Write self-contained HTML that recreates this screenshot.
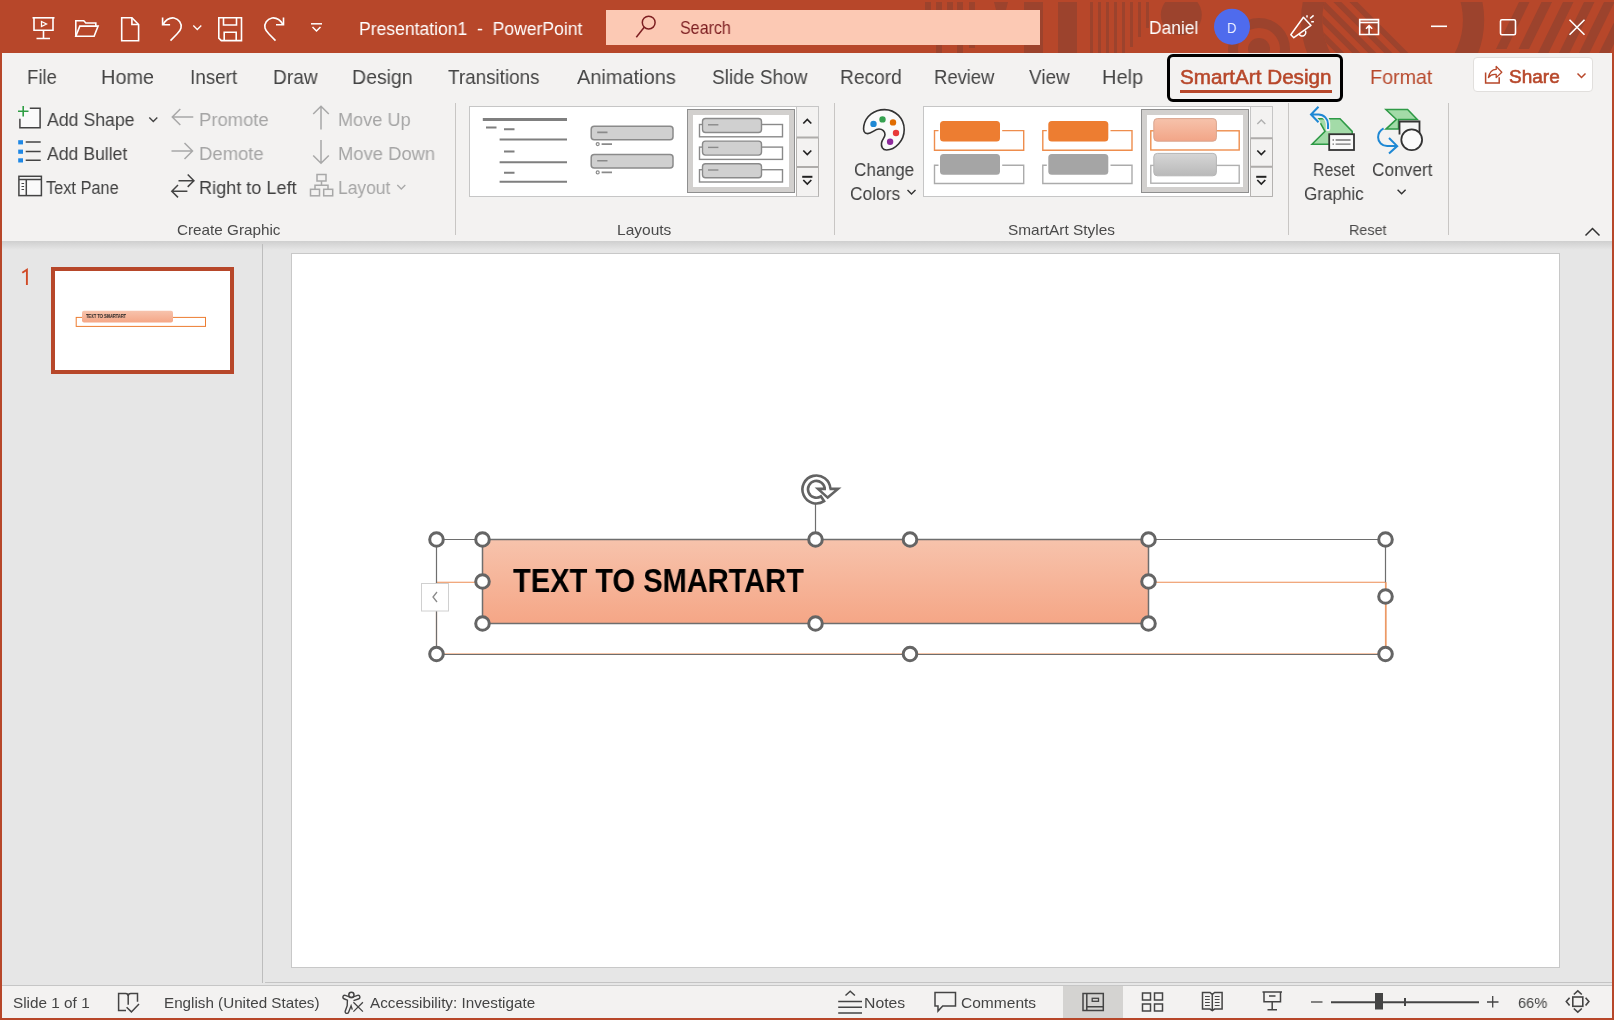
<!DOCTYPE html>
<html><head><meta charset="utf-8"><style>
*{margin:0;padding:0;box-sizing:border-box}
html,body{width:1614px;height:1020px;overflow:hidden;background:#b7472a;font-family:"Liberation Sans",sans-serif;color:#444}
.a{position:absolute}
.t{position:absolute;white-space:nowrap;line-height:1;transform-origin:0 0;will-change:transform}
svg.s{position:absolute;left:0;top:0;overflow:visible}
</style></head><body>
<div class="a" style="left:0;top:0;width:1614px;height:53px;background:#b7472a"></div>
<svg class="s" width="1614" height="53" style="clip-path:inset(2px 0 0 0)"><rect x="925" y="2" width="6" height="9" fill="#9c432d"/><rect x="936" y="2" width="6" height="51" fill="#9c432d"/><rect x="947" y="2" width="6" height="9" fill="#9c432d"/><rect x="957" y="2" width="6" height="51" fill="#9c432d"/><rect x="969" y="2" width="6" height="46" fill="#9c432d"/><polygon points="994,2 1008,2 1006,10 996,10" fill="#9c432d"/><rect x="1024" y="2" width="19" height="51" fill="#9c432d"/><rect x="1058" y="2" width="19" height="51" fill="#9c432d"/><rect x="1090" y="2" width="3" height="51" fill="#9c432d"/><rect x="1098" y="2" width="3" height="51" fill="#9c432d"/><rect x="1106" y="2" width="3" height="51" fill="#9c432d"/><rect x="1114" y="2" width="3" height="51" fill="#9c432d"/><rect x="1122" y="2" width="3" height="51" fill="#9c432d"/><rect x="1130" y="2" width="3" height="45" fill="#9c432d"/><rect x="1138" y="2" width="3" height="35" fill="#9c432d"/><rect x="1146" y="2" width="3" height="26" fill="#9c432d"/><circle cx="1181.3" cy="14.8" r="20.5" fill="#9c432d"/><circle cx="1259" cy="49" r="31" fill="#9c432d"/><circle cx="1259" cy="49" r="21" fill="#b7472a"/><circle cx="1259" cy="49" r="11" fill="#9c432d"/><path fill-rule="evenodd" d="M1484.2 20a91.6 91.6 0 1 0 -183.2 0a91.6 91.6 0 1 0 183.2 0zM1462.9 20a70.3 70.3 0 1 0 -140.6 0a70.3 70.3 0 1 0 140.6 0z" fill="#9c432d"/><clipPath id="hole"><circle cx="1392.6" cy="20" r="70.3"/></clipPath><g clip-path="url(#hole)"><polygon points="1285.3,2 1293.3,2 1346.3,55 1338.3,55" fill="#9c432d"/><polygon points="1301.3,2 1309.3,2 1362.3,55 1354.3,55" fill="#9c432d"/><polygon points="1317.3,2 1325.3,2 1378.3,55 1370.3,55" fill="#9c432d"/><polygon points="1333.3,2 1341.3,2 1394.3,55 1386.3,55" fill="#9c432d"/><polygon points="1349.3,2 1357.3,2 1410.3,55 1402.3,55" fill="#9c432d"/></g><polygon points="1519,2 1529.5,2 1506.5,49 1496.0,49" fill="#9c432d"/><polygon points="1541.5,2 1552.0,2 1529.0,49 1518.5,49" fill="#9c432d"/><polygon points="1563,2 1573.5,2 1548.5,53 1538.0,53" fill="#9c432d"/><polygon points="1584,2 1594.5,2 1569.5,53 1559.0,53" fill="#9c432d"/><polygon points="1604,2 1614.5,2 1589.5,53 1579.0,53" fill="#9c432d"/><polygon points="1624,2 1634.5,2 1609.5,53 1599.0,53" fill="#9c432d"/></svg>
<div class="a" style="left:606px;top:10px;width:434px;height:35px;background:#fcc9b4"></div>

<svg class="s" width="1614" height="53">
 <g stroke="#fff" fill="none" stroke-width="1.6">
  <!-- presenter -->
  <path d="M32.5 17.8h22"/><path d="M34 17.8v12.5h19v-12.5"/><path d="M43.5 30.3v8.2M36.5 38.5h13.5"/>
  <path d="M41.5 21.5v5l5-2.5z" stroke-width="1.3"/>
  <!-- open folder -->
  <path d="M75.8 36.3v-15.5h8l2 2.2h10v3.5"/><path d="M75.8 36.3l4-10.2h18.3l-4 10.2z"/>
  <!-- new doc -->
  <path d="M121.7 17.8v23h16.9v-16.3l-6.7-6.7z"/><path d="M131.9 17.8v6.7h6.7"/>
  <!-- undo -->
  <path d="M162.6 17.5v7.3h7.5"/><path d="M163 24.5c3-5 7-7 11-6.5c5 1 8 5.5 7 10c-0.5 2.5-2 4-4 6l-6.5 6.6"/>
  <path d="M193.3 25.5l4 4l4-4" stroke-width="1.3"/>
  <!-- save -->
  <path d="M218.8 17.8h22.7v22.8h-20.2l-2.5-2.5z"/><path d="M223.5 17.8v7.2h13v-7.2"/><path d="M224.2 40.6v-8.3h12v8.3"/>
  <!-- redo -->
  <path d="M283.5 17.5v7.3h-7.5"/><path d="M283 24.5c-3-5-7-7-11-6.5c-5 1-8 5.5-7 10c0.5 2.5 2 4 4 6l6.5 6.6"/>
  <!-- customize -->
  <path d="M311 23.8h11" stroke-width="1.5"/><path d="M312.5 27l4 4l4-4" stroke-width="1.5"/>
  <!-- search magnifier -->
  <circle cx="648.7" cy="22.6" r="6.4" stroke="#7d1f22" stroke-width="1.5"/><path d="M644.2 27.3l-7.9 9.9" stroke="#7d1f22" stroke-width="1.5"/>
  <!-- megaphone -->
  <path d="M1303.4 17.3l7.6 8.1l-17.2 12.3l-3-3z" stroke-width="1.5" stroke-linejoin="round"/>
  <path d="M1299 34.2a3.6 3.6 0 1 0 6.3-3.6" stroke-width="1.5"/>
  <path d="M1307 15.2v2.2M1310.1 18.5l3.5-3.1M1311.2 21.8h2.7" stroke-width="1.5"/>
  <!-- ribbon display -->
  <path d="M1359.7 19.6h18.8v14.9h-18.8z"/><path d="M1359.7 22.5h18.8"/><path d="M1369.1 34.5v-8.5M1366 28.8l3.1-3.1l3.1 3.1"/>
  <!-- minimize -->
  <path d="M1431 26.3h16"/>
  <!-- maximize -->
  <rect x="1500.5" y="19.7" width="15" height="15" rx="1.5"/>
  <!-- close -->
  <path d="M1569.5 19.7l15 15M1584.5 19.7l-15 15"/>
 </g>
 <circle cx="1232" cy="26.7" r="18" fill="#4f6bed"/>
</svg>
<div class="a" style="left:2px;top:53px;width:1610px;height:188px;background:#f3f2f1"></div>
<div class="a" style="left:2px;top:241px;width:1610px;height:9px;background:linear-gradient(#cfcfcf,#e6e6e6)"></div>
<div class="a" style="left:1167px;top:54px;width:176px;height:48px;border:3px solid #000;border-radius:6px"></div>
<div class="a" style="left:1180px;top:90px;width:152px;height:3px;background:#b7472a"></div>
<div class="a" style="left:1473px;top:57px;width:120px;height:35px;background:#fff;border:1px solid #e1dfdd;border-radius:4px"></div>
<svg class="s" width="1614" height="120"><g fill="none" stroke="#b7472a" stroke-width="1.5">
<path d="M1485.6 72.6V83.1H1499.2V77.2"/><path d="M1488.4 77.6C1489.5 72 1492 69.5 1496.2 69.4V66.4L1501.8 72.3L1496.2 77.6V74.5C1492.5 74 1490 75.5 1488.4 77.6Z" stroke-width="1.3" stroke-linejoin="round"/>
<path d="M1577.5 73.5l4 4l4-4"/></g></svg>
<div class="a" style="left:455px;top:103px;width:1px;height:132px;background:#c8c6c4"></div>
<div class="a" style="left:834px;top:103px;width:1px;height:132px;background:#c8c6c4"></div>
<div class="a" style="left:1288px;top:103px;width:1px;height:132px;background:#c8c6c4"></div>
<div class="a" style="left:1448px;top:103px;width:1px;height:132px;background:#c8c6c4"></div>
<svg class="s" width="1614" height="250"><g fill="none" stroke="#444" stroke-width="1.5"><rect x="20" y="108.3" width="20" height="19.5" fill="#fafafa" stroke="none"/><path d="M29.8 108.2h10.3v19.6h-20.2v-9"/></g><g fill="none" stroke="#2f9e44" stroke-width="1.6"><path d="M23.2 106v10.5M18 111.2h10.5"/></g><g fill="#1e88e5"><rect x="18.2" y="140.2" width="4.8" height="4.2"/><rect x="18.2" y="149.6" width="4.8" height="4.2"/><rect x="18.2" y="158.3" width="4.8" height="4.2"/></g><g fill="none" stroke="#444" stroke-width="1.5"><path d="M25.7 142h15M25.7 151.6h15M25.7 160.2h15"/><rect x="18.9" y="176.3" width="22.5" height="19.3" fill="#fafafa"/><path d="M18.9 179.5h22.5M26.3 179.5v16.5"/><path d="M21.5 183.5h2.6M21.5 186.5h2.6M21.5 189.5h2.6" stroke-width="1.2"/><path d="M149.3 117.4l4 4l4-4" stroke-width="1.4"/><path d="M178.5 180.7h16M187.7 174.5l6.2 6.2l-6.2 6.2M187.4 191.3h-16M178 185l-6.2 6.2l6.2 6.2"/></g><g fill="none" stroke="#a8a8a8" stroke-width="1.5"><path d="M193.3 117h-21M180.3 109l-8 8l8 8"/><path d="M171.5 151h21M184.5 143l8 8l-8 8"/><path d="M321 107v22.5M313.2 114l7.8-7.8l7.8 7.8"/><path d="M321 140v22.5M313.2 155.5l7.8 7.8l7.8-7.8"/><rect x="317" y="174.5" width="9" height="6.5"/><rect x="310.5" y="189.3" width="9" height="6.5"/><rect x="323.7" y="189.3" width="9" height="6.5"/><path d="M321.5 181v4.2h-6.5v4M321.5 185.2h6.5v4"/><path d="M397.3 185l4 4l4-4" stroke-width="1.3"/></g></svg>
<svg class="s" width="1614" height="250"><rect x="469.5" y="106.5" width="349" height="90" fill="#fff" stroke="#c6c6c6"/><rect x="796.5" y="106.5" width="22" height="90" fill="#f3f2f1" stroke="#c6c6c6"/><path d="M796.5 137.5h22M796.5 167h22" stroke="#aeacaa" stroke-width="2"/><path d="M796.5 138v58.5M818.5 138v58.5" stroke="#b4b2b0"/><g fill="none" stroke="#222" stroke-width="1.7"><path d="M803.3 123.5l4-4l4 4M803.3 150.5l4 4l4-4M803.3 180l4 4l4-4"/><path d="M802.2 176.8h10.2" stroke-width="2"/></g><g fill="none" stroke="#7f7f7f" stroke-width="2"><path d="M482.8 119.5h84.2" stroke-width="3"/><path d="M486 127.6h10.5M504 129.2h10.5M499.6 139.6h67.4M504 151.5h10.5M499.6 162.2h67.4M504 172.7h10.5M499.6 181.7h67.4"/></g><rect x="591.2" y="126.3" width="81.8" height="13.5" rx="3" fill="#d0d0d0" stroke="#8a8a8a" stroke-width="1.5"/><path d="M597.2 132.4h10.3M601.6 144.1h10.4" stroke="#8a8a8a" stroke-width="1.6"/><circle cx="597.7" cy="144.1" r="1.5" fill="none" stroke="#8a8a8a" stroke-width="1.2"/><rect x="591.2" y="154.6" width="81.8" height="13.5" rx="3" fill="#d0d0d0" stroke="#8a8a8a" stroke-width="1.5"/><path d="M597.2 160.70000000000002h10.3M601.6 172.4h10.4" stroke="#8a8a8a" stroke-width="1.6"/><circle cx="597.7" cy="172.4" r="1.5" fill="none" stroke="#8a8a8a" stroke-width="1.2"/><rect x="687.5" y="109.5" width="107" height="83" fill="#d2d0ce" stroke="#8f8f8f"/><rect x="693" y="115" width="96" height="72" fill="#fff"/><rect x="699.5" y="124.5" width="83" height="12.3" fill="none" stroke="#8a8a8a" stroke-width="1.4"/><rect x="702.5" y="118.5" width="59" height="14" rx="3" fill="#d0d0d0" stroke="#8a8a8a" stroke-width="1.4"/><path d="M708 124.8h10.4" stroke="#8a8a8a" stroke-width="1.4"/><rect x="699.5" y="147.1" width="83" height="12.3" fill="none" stroke="#8a8a8a" stroke-width="1.4"/><rect x="702.5" y="141.1" width="59" height="14" rx="3" fill="#d0d0d0" stroke="#8a8a8a" stroke-width="1.4"/><path d="M708 147.4h10.4" stroke="#8a8a8a" stroke-width="1.4"/><rect x="699.5" y="169.7" width="83" height="12.3" fill="none" stroke="#8a8a8a" stroke-width="1.4"/><rect x="702.5" y="163.7" width="59" height="14" rx="3" fill="#d0d0d0" stroke="#8a8a8a" stroke-width="1.4"/><path d="M708 170.0h10.4" stroke="#8a8a8a" stroke-width="1.4"/><rect x="923.5" y="106.5" width="349" height="90" fill="#fff" stroke="#c6c6c6"/><rect x="1250.5" y="106.5" width="22" height="90" fill="#f3f2f1" stroke="#c6c6c6"/><path d="M1250.5 138.3h22M1250.5 166.8h22" stroke="#aeacaa" stroke-width="2"/><path d="M1250.5 138.5v58M1272.5 138.5v58M1250.5 196.5h22" stroke="#b4b2b0"/><g fill="none" stroke-width="1.4"><path d="M1257.3 124l4-4l4 4" stroke="#b0b0b0"/><path d="M1257.3 150.5l4 4l4-4M1257.3 180l4 4l4-4" stroke="#222" stroke-width="1.7"/><path d="M1256.2 176.8h10.2" stroke="#222" stroke-width="2"/></g><defs><linearGradient id="sg1" x1="0" y1="0" x2="0" y2="1"><stop offset="0" stop-color="#f6c2ab"/><stop offset="1" stop-color="#f2a587"/></linearGradient><linearGradient id="sg2" x1="0" y1="0" x2="0" y2="1"><stop offset="0" stop-color="#d6d6d6"/><stop offset="1" stop-color="#b9b9b9"/></linearGradient></defs><path d="M938.5 130.6h-4v19.7h89.2v-19.7h-21.5" fill="none" stroke="#ee8d4d" stroke-width="1.4"/><rect x="940" y="120.9" width="60" height="20.7" rx="3.5" fill="#ed7d31"/><path d="M938.5 165.2h-4v18.3h89.2v-18.3h-21.5" fill="none" stroke="#ababab" stroke-width="1.4"/><rect x="940" y="154.1" width="60" height="20.6" rx="3.5" fill="#a5a5a5"/><path d="M1046.8 130.6h-4v19.7h89.2v-19.7h-21.5" fill="none" stroke="#ee8d4d" stroke-width="1.4"/><rect x="1048.3" y="120.9" width="60" height="20.7" rx="3.5" fill="#ed7d31"/><path d="M1046.8 165.2h-4v18.3h89.2v-18.3h-21.5" fill="none" stroke="#ababab" stroke-width="1.4"/><rect x="1048.3" y="154.1" width="60" height="20.6" rx="3.5" fill="#a5a5a5"/><rect x="1141.5" y="109.5" width="107" height="83" fill="#d2d0ce" stroke="#8f8f8f"/><rect x="1147" y="115" width="96" height="72" fill="#fff"/><rect x="1150.8" y="130.8" width="88.4" height="19.2" fill="none" stroke="#ee8d4d" stroke-width="1.4"/><rect x="1153.8" y="118.6" width="62.6" height="22.6" rx="3.5" fill="url(#sg1)" stroke="#d9a58f" stroke-width="1"/><rect x="1150.8" y="165.4" width="88.4" height="17.8" fill="none" stroke="#b0b0b0" stroke-width="1.4"/><rect x="1153.8" y="153.4" width="62.6" height="22.4" rx="3.5" fill="url(#sg2)" stroke="#b5b5b5" stroke-width="1"/><path d="M867.7 133.6C864 133.6 863 130.5 863.8 126C865.5 116.5 874 109.6 884.6 109.6C895.5 109.6 904.2 118.5 904.2 129.5C904.2 141 895 150 886.6 150C882.5 150 881 146.5 881.5 143C882 139.5 885 137.5 885 134.6C885 131.5 882.5 129 879 129C875 129 871.5 133.6 867.7 133.6Z" fill="#fafafa" stroke="#333" stroke-width="1.6"/><circle cx="873.5" cy="123.9" r="3.2" fill="#1e88d4"/><circle cx="882.5" cy="119.4" r="3.2" fill="#36a150"/><circle cx="893" cy="122.4" r="3.2" fill="#e06c00"/><circle cx="896" cy="133" r="3.2" fill="#e83a3a"/><circle cx="890.1" cy="141.8" r="3.2" fill="#8e2b9c"/><path d="M907.5 190l4 4l4-4" fill="none" stroke="#333" stroke-width="1.4"/><polygon points="1318,118.7 1340,118.7 1352.2,131.4 1352.2,144.2 1312,144.2 1325,131.4" fill="#a3dba8" stroke="#2e9a46" stroke-width="1.5" stroke-linejoin="miter"/><rect x="1329.2" y="134.2" width="24.8" height="15.8" fill="#fafafa" stroke="#333" stroke-width="1.8"/><path d="M1335.6 140h15M1335.6 144.2h15" stroke="#777" stroke-width="1.3"/><path d="M1332.5 140h1.5M1332.5 144.2h1.5" stroke="#777" stroke-width="1.3"/><path d="M1311.5 114.5h7c5.5 0 9.5 4.5 9.5 9.5v5M1318.5 106.8l-7.5 7.7l7.5 7.7" fill="none" stroke="#f3f2f1" stroke-width="4.5" stroke-linecap="round"/><path d="M1311.5 114.5h7c5.5 0 9.5 4.5 9.5 9.5v5M1318.5 106.8l-7.5 7.7l7.5 7.7" fill="none" stroke="#1e88d4" stroke-width="2"/><polygon points="1385.9,109.5 1407.6,109.5 1417.3,119.4 1398.5,119.4 1398.5,129.1 1385.9,129.1 1396.4,119.4" fill="#a3dba8" stroke="#2e9a46" stroke-width="1.5"/><path d="M1399.5 134.5v-13h20v13" fill="#f5f5f5" stroke="#333" stroke-width="1.8"/><circle cx="1411.7" cy="139.8" r="10.4" fill="#fafafa" stroke="#333" stroke-width="1.8"/><path d="M1383.6 128.3c-3.5 2-5.5 5.5-5.5 9c0 5 4 8.8 9 8.8h10.4M1389 138l8.2 8.1l-8.2 7.5" fill="none" stroke="#1e88d4" stroke-width="2"/><path d="M1397.6 189.8l4 4l4-4" fill="none" stroke="#333" stroke-width="1.4"/><path d="M1585.5 235.5l7-7l7 7" fill="none" stroke="#333" stroke-width="1.5"/></svg>
<div class="a" style="left:2px;top:250px;width:1610px;height:736px;background:#e6e6e6"></div>
<div class="a" style="left:262px;top:244px;width:1px;height:739px;background:#bdbdbd"></div>
<div class="a" style="left:265px;top:982px;width:1347px;height:1px;background:#c4c4c4"></div>
<div class="a" style="left:2px;top:985px;width:1610px;height:1px;background:#c6c6c6"></div>
<div class="a" style="left:291px;top:253px;width:1269px;height:715px;background:#fff;border:1px solid #c8c8c8"></div>
<div class="a" style="left:51px;top:267px;width:183px;height:107px;background:#fff;border:4px solid #b7472a"></div>
<svg class="s" width="100" height="300"><path d="M26.9 285V269.8L22.3 272.8" fill="none" stroke="#d04a26" stroke-width="1.9" stroke-linejoin="miter"/></svg>
<svg class="s" width="1614" height="1020"><defs><linearGradient id="og" x1="0" y1="0" x2="0" y2="1"><stop offset="0" stop-color="#f7c3ac"/><stop offset="1" stop-color="#f5a686"/></linearGradient></defs><rect x="76.2" y="317.4" width="129.3" height="9" fill="none" stroke="#ed7d31" stroke-width="1"/><rect x="82" y="310.8" width="91" height="11.8" rx="2" fill="url(#og)"/><rect x="436.5" y="582.3" width="949" height="71.7" fill="none" stroke="#f0a070" stroke-width="1.2"/><rect x="482.5" y="539.5" width="666" height="84" rx="4" fill="url(#og)"/><g fill="none" stroke="#6e6e6e" stroke-width="1.2"><path d="M436.5 539.5h949v43M436.5 539.5v115h949"/><rect x="482.5" y="539.5" width="666" height="84" stroke-width="1.5"/><path d="M815.5 504v35.5"/></g><path d="M1386 582.3v71.7" stroke="#e9955f" stroke-width="1.2"/><rect x="421.5" y="583.5" width="27" height="27.5" fill="#fff" stroke="#d0d0d0"/><path d="M437 592l-4 5l4 5" fill="none" stroke="#8a8a8a" stroke-width="1.3"/><circle cx="436.5" cy="539.5" r="6.8" fill="#fff" stroke="#656565" stroke-width="3"/><circle cx="910" cy="539.5" r="6.8" fill="#fff" stroke="#656565" stroke-width="3"/><circle cx="1385.5" cy="539.5" r="6.8" fill="#fff" stroke="#656565" stroke-width="3"/><circle cx="1385.5" cy="596.5" r="6.8" fill="#fff" stroke="#656565" stroke-width="3"/><circle cx="1385.5" cy="654" r="6.8" fill="#fff" stroke="#656565" stroke-width="3"/><circle cx="910" cy="654" r="6.8" fill="#fff" stroke="#656565" stroke-width="3"/><circle cx="436.5" cy="654" r="6.8" fill="#fff" stroke="#656565" stroke-width="3"/><circle cx="482.5" cy="539.5" r="6.8" fill="#fff" stroke="#656565" stroke-width="3"/><circle cx="815.5" cy="539.5" r="6.8" fill="#fff" stroke="#656565" stroke-width="3"/><circle cx="1148.5" cy="539.5" r="6.8" fill="#fff" stroke="#656565" stroke-width="3"/><circle cx="482.5" cy="581.5" r="6.8" fill="#fff" stroke="#656565" stroke-width="3"/><circle cx="1148.5" cy="581.5" r="6.8" fill="#fff" stroke="#656565" stroke-width="3"/><circle cx="482.5" cy="623.5" r="6.8" fill="#fff" stroke="#656565" stroke-width="3"/><circle cx="815.5" cy="623.5" r="6.8" fill="#fff" stroke="#656565" stroke-width="3"/><circle cx="1148.5" cy="623.5" r="6.8" fill="#fff" stroke="#656565" stroke-width="3"/><g fill="none" stroke="#636363" stroke-width="2.6" stroke-linejoin="miter"><path d="M830.4 488.7A14 14 0 1 0 824.1 501.2L820.9 496.4A8.4 8.4 0 1 1 824.8 489"/><path d="M826 488.9H818L827.7 497.6L838 488.9H829.5"/></g></svg>
<div class="a" style="left:2px;top:986px;width:1610px;height:32px;background:#f3f2f1"></div>
<div class="a" style="left:1063px;top:986px;width:60px;height:32px;background:#d4d3d1"></div>
<svg class="s" width="1614" height="1020"><g fill="none" stroke="#444" stroke-width="1.5"><path d="M126 1010.4h-7.4v-16.9h7c1.5 0 2.6 1.2 2.6 2.6v8.7M128.2 1004.8"/><path d="M128.2 996.1c0-1.4 1.2-2.6 2.6-2.6h6.7v8.2"/><path d="M126.6 1007.2l4.8 4.7l7.6-8"/><circle cx="351.4" cy="994.9" r="2.6"/><path d="M353.5 1000.6l4.8-1.6c2.6-0.9 1.8-4.2-0.8-3.6l-6.1 2.2l-6.1-2.2c-2.6-0.6-3.4 2.7-0.8 3.6l2.9 1.2l-0.2 5.5l-2 5.5c-0.6 2.4 2.8 3 3.5 0.8l2.4-6.2l1.2 3.8" stroke-width="1.4"/><path d="M353.4 1002.3l9.5 9.3M362.9 1002.3l-9.5 9.3" stroke-width="1.3"/><path d="M845.5 995.5l4.7-4.2l4.7 4.2M838.2 1001.6h23.8M838.2 1007.2h23.8M838.2 1013h23.8"/><path d="M935 992.5h20.5v13.5h-12.8l-4.7 5v-5h-3z"/><rect x="1083" y="993.5" width="20.3" height="17"/><path d="M1086.8 993.5v17M1086.8 1006.8h16.5"/><rect x="1092.2" y="998.3" width="6.3" height="3" stroke-width="1.3"/><rect x="1142.5" y="993" width="8" height="7"/><rect x="1154.5" y="993" width="8" height="7"/><rect x="1142.5" y="1004" width="8" height="7"/><rect x="1154.5" y="1004" width="8" height="7"/><path d="M1202.5 992.5h7.5l2.3 2l2.3-2h7.5v16.5h-7.5l-2.3 1.5l-2.3-1.5h-7.5z M1212.3 994.5v16"/><path d="M1205 996.5h4.8M1205 999.5h4.8M1205 1002.5h4.8M1205 1005.5h4.8M1214.8 996.5h4.8M1214.8 999.5h4.8M1214.8 1002.5h4.8M1214.8 1005.5h4.8" stroke-width="1.1"/><path d="M1262.5 992h19.5M1264 992v9.8h16.5v-9.8M1272.2 1001.8v8M1267.5 1009.8h9.5M1269 996h6.5"/><path d="M1311 1002h11.5" stroke-width="1.3"/><path d="M1487 1002h11.5M1492.7 996v11.5" stroke-width="1.3"/><path d="M1331 1002.2h148" stroke-width="2"/><path d="M1405 998v8" stroke-width="2"/><rect x="1572.8" y="997" width="10" height="9.3" stroke-width="1.6"/><path d="M1573.8 994.5l4-3.6l4 3.6M1573.8 1008.5l4 3.6l-4-3.6M1573.8 1008.5l4 3.6l4-3.6M1569.6 997.7l-3.3 3.9l3.3 3.9M1585.6 997.7l3.3 3.9l-3.3 3.9" stroke-width="1.6"/></g><rect x="1375" y="993" width="8" height="16.5" fill="#444"/></svg>
<div class="t" style="left:358.52px;top:20px;font-size:18px;color:#fff;font-weight:normal;transform:scaleX(0.9754);">Presentation1  -  PowerPoint</div>
<div class="t" style="left:680.00px;top:19px;font-size:18.5px;color:#7d1f22;font-weight:normal;transform:scaleX(0.8675);">Search</div>
<div class="t" style="left:1148.63px;top:19px;font-size:18px;color:#fff;font-weight:normal;transform:scaleX(0.9667);">Daniel</div>
<div class="t" style="left:1226.73px;top:20px;font-size:15px;color:#eef0ff;font-weight:normal;transform:scaleX(0.8700);">D</div>
<div class="t" style="left:27.29px;top:67px;font-size:20.3px;color:#444;font-weight:normal;transform:scaleX(0.9108);">File</div>
<div class="t" style="left:101.02px;top:67px;font-size:20.3px;color:#444;font-weight:normal;transform:scaleX(0.9807);">Home</div>
<div class="t" style="left:189.67px;top:67px;font-size:20.3px;color:#444;font-weight:normal;transform:scaleX(0.9304);">Insert</div>
<div class="t" style="left:272.76px;top:67px;font-size:20.3px;color:#444;font-weight:normal;transform:scaleX(0.9426);">Draw</div>
<div class="t" style="left:352.04px;top:67px;font-size:20.3px;color:#444;font-weight:normal;transform:scaleX(0.9614);">Design</div>
<div class="t" style="left:448.40px;top:67px;font-size:20.3px;color:#444;font-weight:normal;transform:scaleX(0.9299);">Transitions</div>
<div class="t" style="left:577.40px;top:67px;font-size:20.3px;color:#444;font-weight:normal;transform:scaleX(0.9842);">Animations</div>
<div class="t" style="left:711.50px;top:67px;font-size:20.3px;color:#444;font-weight:normal;transform:scaleX(0.9419);">Slide Show</div>
<div class="t" style="left:839.55px;top:67px;font-size:20.3px;color:#444;font-weight:normal;transform:scaleX(0.9461);">Record</div>
<div class="t" style="left:933.79px;top:67px;font-size:20.3px;color:#444;font-weight:normal;transform:scaleX(0.9081);">Review</div>
<div class="t" style="left:1028.50px;top:67px;font-size:20.3px;color:#444;font-weight:normal;transform:scaleX(0.9330);">View</div>
<div class="t" style="left:1102.42px;top:67px;font-size:20.3px;color:#444;font-weight:normal;transform:scaleX(0.9844);">Help</div>
<div class="t" style="left:1180.40px;top:67px;font-size:20.3px;color:#b7472a;font-weight:normal;transform:scaleX(1.0184);-webkit-text-stroke:0.55px #b7472a;">SmartArt Design</div>
<div class="t" style="left:1369.83px;top:67px;font-size:20.3px;color:#b7472a;font-weight:normal;transform:scaleX(0.9718);">Format</div>
<div class="t" style="left:1509.00px;top:67px;font-size:19px;color:#b7472a;font-weight:normal;-webkit-text-stroke:0.6px #b7472a;">Share</div>
<div class="t" style="left:176.70px;top:222px;font-size:15px;color:#4a4a4a;font-weight:normal;transform:scaleX(1.0175);">Create Graphic</div>
<div class="t" style="left:617.47px;top:222px;font-size:15px;color:#4a4a4a;font-weight:normal;transform:scaleX(1.0346);">Layouts</div>
<div class="t" style="left:1008.00px;top:222px;font-size:15px;color:#4a4a4a;font-weight:normal;transform:scaleX(1.0262);">SmartArt Styles</div>
<div class="t" style="left:1348.74px;top:222px;font-size:15px;color:#4a4a4a;font-weight:normal;transform:scaleX(0.9560);">Reset</div>
<div class="t" style="left:46.80px;top:111px;font-size:18.7px;color:#404040;font-weight:normal;transform:scaleX(0.9469);">Add Shape</div>
<div class="t" style="left:46.80px;top:145px;font-size:18.7px;color:#404040;font-weight:normal;transform:scaleX(0.9431);">Add Bullet</div>
<div class="t" style="left:46.10px;top:179px;font-size:18.7px;color:#404040;font-weight:normal;transform:scaleX(0.8741);">Text Pane</div>
<div class="t" style="left:198.51px;top:111px;font-size:18.7px;color:#a5a5a5;font-weight:normal;transform:scaleX(0.9865);">Promote</div>
<div class="t" style="left:198.51px;top:145px;font-size:18.7px;color:#a5a5a5;font-weight:normal;transform:scaleX(0.9884);">Demote</div>
<div class="t" style="left:198.53px;top:179px;font-size:18.7px;color:#404040;font-weight:normal;transform:scaleX(0.9685);">Right to Left</div>
<div class="t" style="left:337.83px;top:111px;font-size:18.7px;color:#a5a5a5;font-weight:normal;transform:scaleX(0.9702);">Move Up</div>
<div class="t" style="left:337.82px;top:145px;font-size:18.7px;color:#a5a5a5;font-weight:normal;transform:scaleX(0.9838);">Move Down</div>
<div class="t" style="left:337.87px;top:179px;font-size:18.7px;color:#a5a5a5;font-weight:normal;transform:scaleX(0.9318);">Layout</div>
<div class="t" style="left:854.20px;top:161px;font-size:18.7px;color:#404040;font-weight:normal;transform:scaleX(0.9190);">Change</div>
<div class="t" style="left:850.00px;top:185px;font-size:18.7px;color:#404040;font-weight:normal;transform:scaleX(0.9281);">Colors</div>
<div class="t" style="left:1312.85px;top:161px;font-size:18.7px;color:#404040;font-weight:normal;transform:scaleX(0.8493);">Reset</div>
<div class="t" style="left:1304.40px;top:185px;font-size:18.7px;color:#404040;font-weight:normal;transform:scaleX(0.9126);">Graphic</div>
<div class="t" style="left:1371.50px;top:161px;font-size:18.7px;color:#404040;font-weight:normal;transform:scaleX(0.9239);">Convert</div>
<div class="t" style="left:513.20px;top:564px;font-size:33px;color:#000;font-weight:bold;transform:scaleX(0.8800);">TEXT TO SMARTART</div>
<div class="t" style="left:86.30px;top:314px;font-size:5px;color:#222;font-weight:bold;transform:scaleX(0.7994);">TEXT TO SMARTART</div>
<div class="t" style="left:13.20px;top:995px;font-size:15px;color:#444;font-weight:normal;transform:scaleX(1.0213);">Slide 1 of 1</div>
<div class="t" style="left:164.49px;top:995px;font-size:15px;color:#444;font-weight:normal;transform:scaleX(1.0137);">English (United States)</div>
<div class="t" style="left:369.50px;top:995px;font-size:15px;color:#444;font-weight:normal;transform:scaleX(1.0159);">Accessibility: Investigate</div>
<div class="t" style="left:864.35px;top:995px;font-size:15px;color:#444;font-weight:normal;transform:scaleX(1.0508);">Notes</div>
<div class="t" style="left:960.50px;top:995px;font-size:15px;color:#444;font-weight:normal;transform:scaleX(1.0359);">Comments</div>
<div class="t" style="left:1517.50px;top:995px;font-size:15.5px;color:#444;font-weight:normal;transform:scaleX(0.9443);">66%</div>
</body></html>
